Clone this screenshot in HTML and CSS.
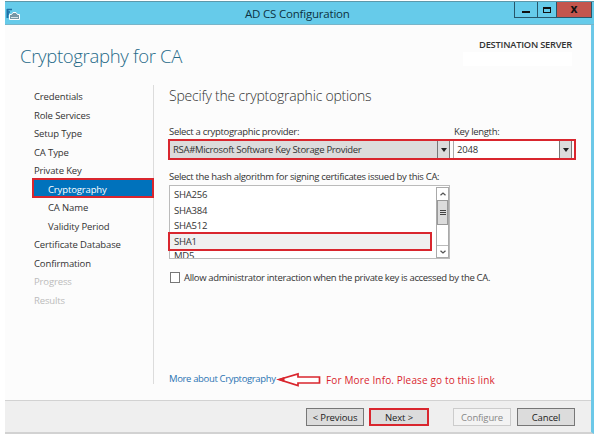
FILE: index.html
```html
<!DOCTYPE html>
<html lang="en">
<head>
    <meta charset="UTF-8">
    <meta name="viewport" content="width=device-width, initial-scale=1.0">
    <title>AD CS Configuration</title>
    <link rel="stylesheet" href="styles.css">
</head>
<body>
    <div class="window">
        <!-- Title bar -->
        <div class="titlebar">
            <svg class="app-icon" width="14" height="13" viewBox="0 0 14 13">
                <path d="M1 1.500h5M1 4h3M1 6h2" stroke="#1d6fa5" stroke-width="1.400"/>
                <path d="M1.500 1v9" stroke="#1d6fa5" stroke-width="2"/>
                <path d="M3.500 11.500V6.500h2L7 4.500h3l1.500 2h2v5z" fill="#7797a5" stroke="#fff"/>
                <path d="M5 9.500h7" stroke="#d7e5e9"/>
            </svg>
            <div class="caption">AD CS Configuration</div>
            <div class="controls">
                <div class="control"><span class="minimize"></span></div>
                <div class="control maximize-box"><span class="maximize"></span></div>
                <div class="control close">x</div>
            </div>
        </div>

        <div class="header">
            <h1>Cryptography for CA</h1>
            <div class="server">
                <div class="server-label">DESTINATION SERVER</div>
                <div class="server-name"></div>
            </div>
        </div>

        <div class="content">
            <!-- Wizard steps -->
            <ul class="steps">
                <li>Credentials</li>
                <li>Role Services</li>
                <li>Setup Type</li>
                <li>CA Type</li>
                <li>Private Key</li>
                <li class="sub current">Cryptography</li>
                <li class="sub">CA Name</li>
                <li class="sub">Validity Period</li>
                <li>Certificate Database</li>
                <li>Confirmation</li>
                <li class="disabled">Progress</li>
                <li class="disabled">Results</li>
            </ul>

            <div class="options">
                <h2>Specify the cryptographic options</h2>

                <div class="labels">
                    <label class="provider-label">Select a cryptographic provider:</label>
                    <label class="length-label">Key length:</label>
                </div>
                <div class="selects">
                    <div class="select provider">
                        <span class="value">RSA#Microsoft Software Key Storage Provider</span>
                        <span class="drop"></span>
                    </div>
                    <div class="select length">
                        <span class="value number">2048</span>
                        <span class="drop"></span>
                    </div>
                </div>

                <label class="hash-label">Select the hash algorithm for signing certificates issued by this CA:</label>
                <div class="listbox">
                    <div class="items">
                        <div class="item">SHA256</div>
                        <div class="item">SHA384</div>
                        <div class="item">SHA512</div>
                        <div class="item selected">SHA1</div>
                        <div class="item">MD5</div>
                    </div>
                    <div class="scrollbar">
                        <div class="arrow">
                            <svg width="8" height="6" viewBox="0 0 8 6"><path d="M1.500 4.200L4 2l2.500 2.200" fill="none" stroke="#555" stroke-width="1.300"/></svg>
                        </div>
                        <div class="thumb"><i></i><i></i><i></i></div>
                        <div class="arrow down">
                            <svg width="8" height="6" viewBox="0 0 8 6"><path d="M1.500 1.800L4 4l2.500-2.200" fill="none" stroke="#555" stroke-width="1.300"/></svg>
                        </div>
                    </div>
                </div>

                <div class="allow">
                    <span class="checkbox"></span>
                    <span class="allow-text">Allow administrator interaction when the private key is accessed by the CA.</span>
                </div>

                <div class="more">
                    <a class="link">More about Cryptography</a>
                    <svg class="pointer" width="46" height="15" viewBox="0 0 46 15">
                        <path d="M3 7.500L22 2v3h21.500v6H22v2.500z" fill="#fff" stroke="#d9262e" stroke-width="1.700"/>
                        <path d="M1.500 7.500l7-2.500v5z" fill="#d9262e"/>
                    </svg>
                    <span class="note">For More Info. Please go to this link</span>
                </div>
            </div>
        </div>

        <div class="footer">
            <button class="previous">&lt; Previous</button>
            <button class="next">Next &gt;</button>
            <button class="configure" disabled>Configure</button>
            <button class="cancel">Cancel</button>
        </div>
    </div>
</body>
</html>
```
FILE: styles.css
```css
* {
    box-sizing: border-box;
}

body {
    margin: 0;
    background-color: #fff;
    font-family: "Open Sans", "Noto Sans", sans-serif;
    font-size: 9.5px;
    color: #333;
    overflow: hidden;
}

.window {
    width: 589px;
    height: 433px;
    margin: 1px 0 0 5px;
    border-right: 3px solid #6cc8e8;
    border-bottom: 2px solid #d2d2d2;
    background-color: #fcfcfc;
    display: flex;
    flex-direction: column;
}

.titlebar {
    height: 24px;
    width: 589px;
    background-color: #66cbea;
    border-top: 1px solid #5d98aa;
    border-bottom: 1px solid #78b5c9;
    display: flex;
    flex-shrink: 0;
}

.app-icon {
    margin: 6px 0 0 1px;
}

.caption {
    flex: 1;
    padding-left: 225px;
    font-size: 11.5px;
    letter-spacing: -0.2px;
    line-height: 23px;
    color: #0d3242;
    white-space: nowrap;
}

.controls {
    display: flex;
    width: 78px;
    height: 16px;
    margin-right: 2px;
    border: 1px solid #27566a;
    border-top: 0;
}

.control {
    width: 22px;
    display: flex;
    align-items: center;
    justify-content: center;
}

.maximize-box {
    width: 20px;
    border-left: 1px solid #27566a;
    border-right: 1px solid #27566a;
}

.minimize {
    width: 8px;
    height: 2px;
    margin-top: 5px;
    background-color: #111;
}

.maximize {
    width: 8px;
    height: 6px;
    margin-top: 1px;
    border: 1px solid #111;
    border-top-width: 2px;
}

.close {
    flex: 1;
    background-color: #c4554d;
    color: #111;
    font-size: 12px;
    font-weight: bold;
    line-height: 12px;
    padding-bottom: 2px;
}

.header {
    height: 60px;
    padding: 13px 19px 0 15px;
    display: flex;
    justify-content: space-between;
}

h1 {
    margin: 6px 0 0;
    font-size: 18.5px;
    font-weight: 300;
    letter-spacing: -0.32px;
    line-height: 24px;
    color: #266a88;
    white-space: nowrap;
}

.server-label {
    font-size: 9.3px;
    font-weight: 600;
    letter-spacing: -0.22px;
    line-height: 13px;
    text-align: right;
    white-space: nowrap;
}

.server-name {
    width: 109px;
    height: 14px;
    margin-top: 1px;
    margin-left: auto;
    background-color: #fff;
}

.content {
    flex: 1;
    display: flex;
}

.steps {
    width: 149px;
    height: 299px;
    margin: 0;
    padding: 3px 0 0 27px;
    list-style: none;
    letter-spacing: -0.13px;
    border-right: 1px solid #dcdcdc;
}

.steps li {
    height: 18.55px;
    padding-left: 2px;
    line-height: 18.5px;
    white-space: nowrap;
}

.steps .sub {
    padding-left: 16px;
}

.steps .current {
    height: 20px;
    margin: -3px -1px 1.55px 0;
    padding-left: 14px;
    border: 2px solid #d9262e;
    background-color: #0072bc;
    color: #fff;
    line-height: 19px;
}

.steps .disabled {
    color: #bbb;
}

.options {
    flex: 1;
    padding-left: 15px;
    letter-spacing: -0.31px;
    white-space: nowrap;
}

h2 {
    margin: 0;
    font-size: 14px;
    font-weight: 300;
    letter-spacing: -0.21px;
    line-height: 22px;
    color: #333;
}

.labels {
    display: flex;
    height: 13px;
    margin-top: 18px;
    line-height: 13px;
}

.provider-label {
    width: 285px;
}

.selects {
    width: 408px;
    height: 21px;
    margin: 1px 0 0 -1px;
    border: 2px solid #d9262e;
    display: flex;
    gap: 3px;
    background-color: #fcfcfc;
}

.select {
    display: flex;
    line-height: 18px;
}

.provider {
    width: 280px;
    background-color: #dcdcdc;
    border-right: 1px solid #777;
}

.length {
    width: 119px;
    background-color: #fff;
    border-left: 1px solid #aaa;
    border-right: 1px solid #777;
}

.value {
    flex: 1;
    padding-left: 3px;
}

.number {
    letter-spacing: -0.2px;
}

.drop {
    width: 12px;
    background-color: #dcdcdc;
    border-left: 1px solid #777;
    display: flex;
    align-items: center;
    justify-content: center;
}

.drop::before {
    content: "";
    border: 3px solid transparent;
    border-top: 4px solid #222;
    border-bottom: 0;
}

.hash-label {
    display: block;
    height: 13px;
    margin-top: 10px;
    line-height: 13px;
}

.listbox {
    width: 281px;
    height: 74px;
    margin-top: 2px;
    padding: 1px 0 0 4px;
    border: 1px solid #bbb;
    background-color: #fff;
    display: flex;
}

.items {
    flex: 1;
    height: 71px;
    clip-path: inset(0 -6px 0 -6px);
    letter-spacing: -0.2px;
}

.item {
    height: 15.5px;
    line-height: 16px;
}

.item.selected {
    width: 264px;
    height: 19px;
    margin: -2px 0 -3px -6px;
    padding-left: 4px;
    border: 2px solid #d9262e;
    background-color: #f0f0f0;
}

.scrollbar {
    width: 13px;
    height: 71px;
    border: 1px solid #aaa;
    display: flex;
    flex-direction: column;
}

.arrow {
    height: 12px;
    display: flex;
    align-items: center;
    justify-content: center;
}

.thumb {
    height: 25px;
    background-color: #dcdcdc;
    border: 1px solid #999;
    display: flex;
    flex-direction: column;
    align-items: center;
    justify-content: center;
    gap: 1px;
}

.thumb i {
    width: 6px;
    height: 1px;
    background-color: #444;
}

.down {
    margin-top: auto;
    border-top: 1px solid #bbb;
}

.allow {
    display: flex;
    align-items: center;
    gap: 4px;
    margin: 12px 0 0 1px;
    line-height: 13px;
    letter-spacing: -0.33px;
}

.checkbox {
    width: 10px;
    height: 11px;
    border: 1px solid #777;
    background-color: #fff;
}

.more {
    display: flex;
    align-items: center;
    height: 16px;
    margin-top: 86px;
}

.link {
    width: 107px;
    color: #2b74b3;
    letter-spacing: -0.35px;
}

.pointer {
    margin-top: 2px;
}

.note {
    margin: 3px 0 0 4px;
    font-size: 10px;
    letter-spacing: 0.14px;
    color: #d9262e;
}

.footer {
    height: 32px;
    padding: 7px 16px 0 0;
    border-top: 1px solid #d2d2d2;
    background-color: #efefef;
    display: flex;
    justify-content: flex-end;
}

.footer button {
    width: 58px;
    height: 18px;
    padding: 0;
    border: 1px solid #777;
    background-color: #dcdcdc;
    color: #222;
    font-family: inherit;
    font-size: 9.5px;
    letter-spacing: -0.15px;
    line-height: 15px;
    white-space: nowrap;
}

.footer .next {
    width: 60px;
    margin: 0 24px 0 5px;
    border: 2px solid #d9262e;
}

.footer .configure {
    margin-right: 6px;
    border-color: #ccc;
    background-color: #f3f3f3;
    color: #888;
}
```
